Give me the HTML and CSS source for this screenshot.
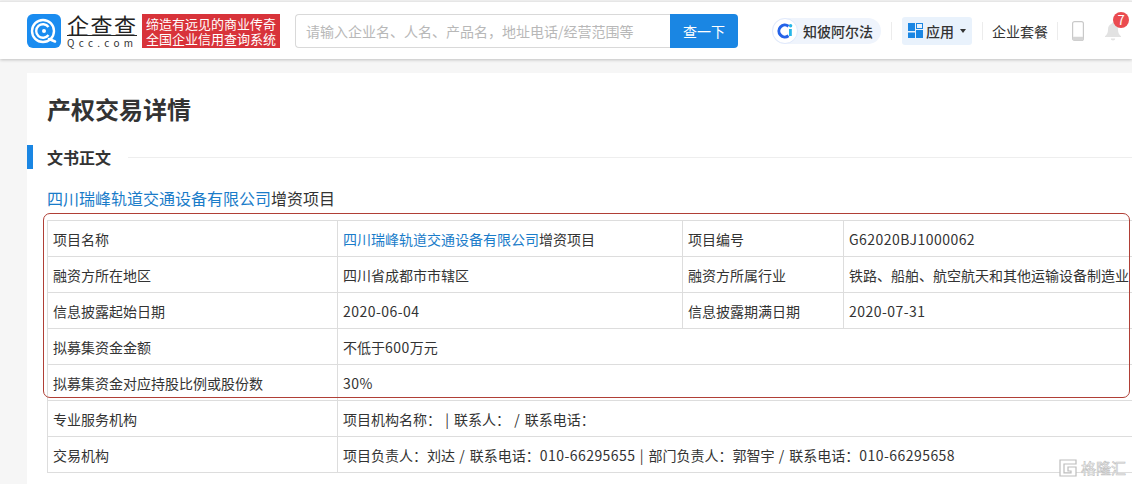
FILE: index.html
```html
<!DOCTYPE html>
<html lang="zh-CN">
<head>
<meta charset="utf-8">
<title>产权交易详情</title>
<link rel="stylesheet" href="styles.css">
</head>
<body>
<header class="topbar">
  <a class="logo">
    <svg class="logo-mark" viewBox="0 0 34 34" width="34" height="34">
      <rect width="34" height="34" rx="6" fill="#1a8cf0"/>
      <circle cx="16" cy="17" r="11" fill="none" stroke="#fff" stroke-width="2.400"/>
      <path d="M21.500 13a6.800 6.800 0 1 0 0 8" fill="none" stroke="#fff" stroke-width="2.400"/>
      <circle cx="17" cy="17" r="2" fill="#fff"/>
      <path d="M22 25l6 2.500" stroke="#fff" stroke-width="2.600" stroke-linecap="round"/>
    </svg>
    <span class="logo-words">
      <span class="logo-cn">企查查</span>
      <span class="logo-en">Qcc.com</span>
    </span>
  </a>
  <div class="slogan">缔造有远见的商业传奇<br>全国企业信用查询系统</div>
  <div class="search">
    <span class="search-input">请输入企业名、人名、产品名，地址电话/经营范围等</span>
    <span class="search-btn">查一下</span>
  </div>
  <a class="alpha">
    <svg class="alpha-icon" viewBox="0 0 26 26" width="26" height="26">
      <circle cx="13" cy="13" r="12.500" fill="#fff" stroke="#dfe8fb"/>
      <path d="M16.500 8.200a6 6 0 1 0 0 9.600" fill="none" stroke="#2563e8" stroke-width="3"/>
      <rect x="17" y="11" width="2.800" height="7" fill="#26b6e8"/>
      <circle cx="18.600" cy="7.800" r="1.700" fill="#26b6e8"/>
    </svg>
    知彼阿尔法
  </a>
  <i class="sep"></i>
  <a class="apps">
    <svg viewBox="0 0 15 15" width="15" height="15">
      <rect x="0" y="0" width="7" height="8" fill="#1a86e3"/>
      <rect x="8.500" y="0.500" width="6" height="5" fill="none" stroke="#1a86e3" stroke-width="1"/>
      <rect x="8" y="7" width="7" height="8" fill="#1a86e3"/>
      <rect x="0" y="9.500" width="7" height="5.500" fill="#1a86e3"/>
    </svg>
    <span>应用</span>
    <i class="caret"></i>
  </a>
  <i class="sep sep-b"></i>
  <a class="plain">企业套餐</a>
  <i class="sep sep-c"></i>
  <svg class="phone" viewBox="0 0 12 20" width="12" height="20">
    <rect x="0.600" y="0.600" width="10.800" height="18.800" rx="2" fill="#fff" stroke="#c9c9c9" stroke-width="1.200"/>
    <rect x="0.600" y="15.800" width="10.800" height="3.600" rx="1.400" fill="#d5d5d5"/>
  </svg>
  <span class="bell-wrap">
    <svg viewBox="0 0 16 20" width="16" height="20">
      <path d="M8 1.500c-.8 0-1.300.6-1.300 1.300C4 3.600 3 6 3 8.500c0 3.400-1 5.200-3 6.800V16h16v-.7c-2-1.600-3-3.400-3-6.800 0-2.500-1-4.900-3.700-5.700 0-.7-.5-1.300-1.300-1.300z" fill="#e2e2e2"/>
      <path d="M5.800 17.500h4.400a2.200 2 0 0 1-4.400 0z" fill="#e2e2e2"/>
    </svg>
    <b class="badge">7</b>
  </span>
</header>

<main class="card">
  <h1 class="title">产权交易详情</h1>
  <h2 class="section"><span>文书正文</span></h2>
  <p class="subject"><a>四川瑞峰轨道交通设备有限公司</a>增资项目</p>
  <div class="table-wrap">
    <table class="info">
      <colgroup>
        <col class="c1"><col class="c2"><col class="c3"><col class="c4">
      </colgroup>
      <tr><th>项目名称</th><td><a>四川瑞峰轨道交通设备有限公司</a>增资项目</td><th>项目编号</th><td><span class="num">G62020BJ1000062</span></td></tr>
      <tr><th>融资方所在地区</th><td>四川省成都市市辖区</td><th>融资方所属行业</th><td>铁路、船舶、航空航天和其他运输设备制造业</td></tr>
      <tr><th>信息披露起始日期</th><td><span class="num">2020-06-04</span></td><th>信息披露期满日期</th><td><span class="num">2020-07-31</span></td></tr>
      <tr><th>拟募集资金金额</th><td colspan="3">不低于<span class="num">600</span>万元</td></tr>
      <tr><th>拟募集资金对应持股比例或股份数</th><td colspan="3"><span class="num">30%</span></td></tr>
      <tr><th>专业服务机构</th><td colspan="3">项目机构名称：<span class="gap"> | </span>联系人：<span class="gap"> / </span>联系电话：</td></tr>
      <tr><th>交易机构</th><td colspan="3">项目负责人：刘达<span class="gap"> / </span>联系电话：<span class="num">010-66295655</span><span class="gap"> | </span>部门负责人：郭智宇<span class="gap"> / </span>联系电话：<span class="num">010-66295658</span></td></tr>
    </table>
    <div class="highlight"></div>
  </div>
</main>

<div class="watermark">
  <svg viewBox="0 0 20 20" width="20" height="20">
    <path d="M18 2H2v16h16V9h-8v4h3v2H6V6h12z" fill="#fff" stroke="#bdbdbd" stroke-width="1.200"/>
  </svg>
  <span>格隆汇</span>
</div>
</body>
</html>
```

FILE: styles.css
```css
* { box-sizing: border-box; }
html, body { margin: 0; height: 484px; overflow: hidden; }
body {
  background: #f6f6f6;
  color: #333;
  font-family: "Noto Sans CJK SC", "Liberation Sans", sans-serif;
  font-size: 14px;
  position: relative;
}
a { text-decoration: none; color: inherit; }
i { font-style: normal; }

.topbar {
  height: 58px;
  background: #fff;
  border-top: 1px solid #e6e6e6;
  margin-top: 1px;
  box-shadow: 0 1px 3px rgba(0,0,0,.22);
  display: flex;
  align-items: center;
  padding-left: 27px;
  position: relative;
}
.logo { display: flex; align-items: center; gap: 6px; }
.logo-mark { display: block; }
.logo-words { display: flex; flex-direction: column; width: 70px; }
.logo-cn {
  font-size: 22px; line-height: 22px; height: 23px; font-weight: 400; color: #222;
  letter-spacing: 1.5px; border-bottom: 1px solid #222; white-space: nowrap;
}
.logo-en { font-size: 10px; line-height: 11px; letter-spacing: 4.300px; color: #333; white-space: nowrap; margin-top: 1px; }
.slogan {
  width: 138px; height: 34px; margin-left: 5px; padding-top: 2px;
  background: #d8333a; color: #fff;
  font-size: 13px; line-height: 15px; text-align: center;
  white-space: nowrap;
}
.search { display: flex; width: 443px; height: 34px; margin-left: 15px; }
.search-input {
  flex: 1; border: 1px solid #d9d9d9; border-right: 0; border-radius: 4px 0 0 4px;
  color: #b8b8b8; line-height: 32px; padding-left: 10px; white-space: nowrap; overflow: hidden;
}
.search-btn {
  width: 68px; background: #1a86e3; color: #fff; text-align: center;
  line-height: 34px; border-radius: 0 4px 4px 0;
}
.alpha {
  display: flex; align-items: center; gap: 5px; height: 26px; width: 109px; margin-left: 34px;
  background: #eff4fc; border-radius: 13px; color: #333; white-space: nowrap; font-weight: 500;
}
.sep { width: 1px; height: 18px; background: #ececec; margin-left: 10px; }
.apps {
  display: flex; align-items: center; height: 28px; width: 70px; margin-left: 10px; padding-left: 6px;
  background: #e9f2fc; border-radius: 3px; color: #333; font-weight: 500;
}
.apps span { margin-left: 3px; }
.caret {
  margin-left: 6px; width: 0; height: 0;
  border-left: 3.500px solid transparent; border-right: 3.500px solid transparent; border-top: 4px solid #333;
}
.sep-b { margin-left: 10px; }
.plain { margin-left: 9px; white-space: nowrap; }
.sep-c { margin-left: 9px; }
.phone { margin-left: 14px; display: block; }
.bell-wrap { position: relative; margin-left: 21px; display: block; height: 20px; }
.bell-wrap svg { display: block; }
.badge {
  position: absolute; left: 8px; top: -9px; width: 16px; height: 16px; border-radius: 50%;
  background: #ea4b50; color: #fff; font-size: 13px; font-weight: 400; line-height: 16px; text-align: center;
}

.card {
  background: #fff;
  margin: 14px 0 0 27px;
  height: 411px;
  padding-top: 17px;
  overflow: hidden;
}
.title {
  margin: 0 0 0 20px; font-size: 24px; line-height: 38px; font-weight: 700; color: #333;
}
.section {
  margin: 17px 0 0; height: 24px; border-left: 6px solid #1a86e3; padding-left: 14px;
  font-size: 16px; line-height: 24px; font-weight: 700; color: #333;
  display: flex; align-items: center;
}
.section::after { content: ""; flex: 1; height: 1px; background: #eee; margin-left: 17px; }
.subject { margin: 17px 0 0 20px; font-size: 16px; line-height: 24px; color: #333; }
.subject a, .info a { color: #1a7cc9; }
.table-wrap { position: relative; margin: 10px 0 0 20px; }
.info {
  border-collapse: collapse; table-layout: fixed; width: 1100px; line-height: 20px;
}
.c1 { width: 290px; } .c2 { width: 345px; } .c3 { width: 161px; } .c4 { width: 304px; }
.info th, .info td {
  border: 1px solid #ddd; height: 36px; padding: 0 5px; font-weight: 400; text-align: left;
  color: #333; white-space: nowrap; overflow: hidden;
}
.num { letter-spacing: .45px; }
.gap { letter-spacing: 1px; white-space: pre; }
.highlight {
  position: absolute; left: -4px; top: -7px; width: 1087px; height: 185px;
  border: 1px solid #b03f36; border-radius: 7px;
}
.watermark {
  position: absolute; left: 1058px; top: 458px; display: flex; align-items: center; gap: 3px;
  color: #fff; font-size: 15px; line-height: 20px; white-space: nowrap;
  -webkit-text-stroke: .6px #c0c0c0;
}
.watermark svg { display: block; }
```
